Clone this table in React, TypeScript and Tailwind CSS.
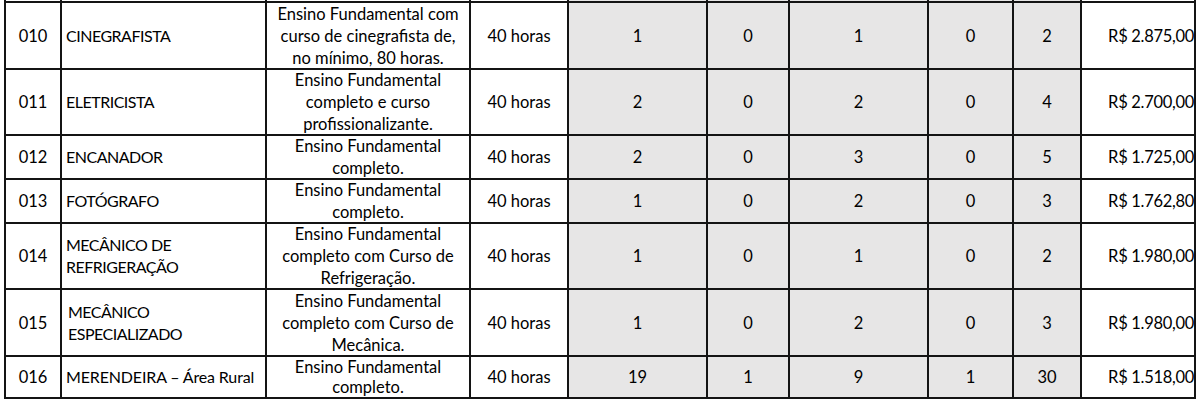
import React from "react";

type Row = {
  code: string;
  name: string[];
  req: string[];
  h: string;
  nums: string[];
  sal: string;
  namePad?: string;
  nameTrack?: string;
  lh?: string;
};

const rows: Row[] = [
  { code: "010", name: ["CINEGRAFISTA"], req: ["Ensino Fundamental com", "curso de cinegrafista de,", "no mínimo, 80 horas."], h: "40 horas", nums: ["1", "0", "1", "0", "2"], sal: "R$ 2.875,00" },
  { code: "011", name: ["ELETRICISTA"], req: ["Ensino Fundamental", "completo e curso", "profissionalizante."], h: "40 horas", nums: ["2", "0", "2", "0", "4"], sal: "R$ 2.700,00" },
  { code: "012", name: ["ENCANADOR"], req: ["Ensino Fundamental", "completo."], h: "40 horas", nums: ["2", "0", "3", "0", "5"], sal: "R$ 1.725,00" },
  { code: "013", name: ["FOTÓGRAFO"], req: ["Ensino Fundamental", "completo."], h: "40 horas", nums: ["1", "0", "2", "0", "3"], sal: "R$ 1.762,80" },
  { code: "014", name: ["MECÂNICO DE", "REFRIGERAÇÃO"], req: ["Ensino Fundamental", "completo com Curso de", "Refrigeração."], h: "40 horas", nums: ["1", "0", "1", "0", "2"], sal: "R$ 1.980,00" },
  { code: "015", name: ["MECÂNICO", "ESPECIALIZADO"], req: ["Ensino Fundamental", "completo com Curso de", "Mecânica."], h: "40 horas", nums: ["1", "0", "2", "0", "3"], sal: "R$ 1.980,00", namePad: "pl-[6px]" },
  { code: "016", name: ["MERENDEIRA – Área Rural"], req: ["Ensino Fundamental", "completo."], h: "40 horas", nums: ["19", "1", "9", "1", "30"], sal: "R$ 1.518,00", lh: "leading-[20px]", nameTrack: "tracking-[-0.15px]" },
];

const gray = "bg-[#e7e6e6]";

export default function App() {
  return (
    <div
      className="w-[1200px] h-[404px] bg-white overflow-hidden text-black text-[16.5px]"
      style={{ fontFamily: "Lato, 'Open Sans', sans-serif" }}
    >
      <div className="ml-[4px] w-[1192px] bg-[#141414] px-[2px] pb-[2px] gap-[2px] grid grid-cols-[54px_203px_202px_96px_137px_80px_137px_83px_66px_112px] grid-rows-[1px_65px_64px_42px_42px_64px_65px_40px] leading-[22px]">
        {/* fragment of the previous row */}
        <div className="bg-white" />
        <div className="bg-white" />
        <div className="bg-white" />
        <div className="bg-white" />
        <div className={gray} />
        <div className={gray} />
        <div className={gray} />
        <div className={gray} />
        <div className={gray} />
        <div className="bg-white" />
        {rows.map((r) => (
          <React.Fragment key={r.code}>
            <div className="bg-white flex items-center justify-center">{r.code}</div>
            <div className={`bg-white flex items-center text-[16px] ${r.namePad ?? "pl-[4px]"}`}>
              <div className={`whitespace-nowrap ${r.nameTrack ?? "tracking-[-0.5px]"}`}>
                {r.name.map((n, i) => (
                  <div key={i}>{n}</div>
                ))}
              </div>
            </div>
            <div className={`bg-white flex items-center justify-center text-center ${r.lh ?? ""}`}>
              <div className="whitespace-nowrap">
                {r.req.map((n, i) => (
                  <div key={i}>{n}</div>
                ))}
              </div>
            </div>
            <div className="bg-white flex items-center justify-center">{r.h}</div>
            {r.nums.map((n, i) => (
              <div key={i} className={`${gray} flex items-center justify-center`}>
                {n}
              </div>
            ))}
            <div className="bg-white flex items-center justify-end whitespace-nowrap tracking-[-0.3px]">
              {r.sal}
            </div>
          </React.Fragment>
        ))}
      </div>
    </div>
  );
}
